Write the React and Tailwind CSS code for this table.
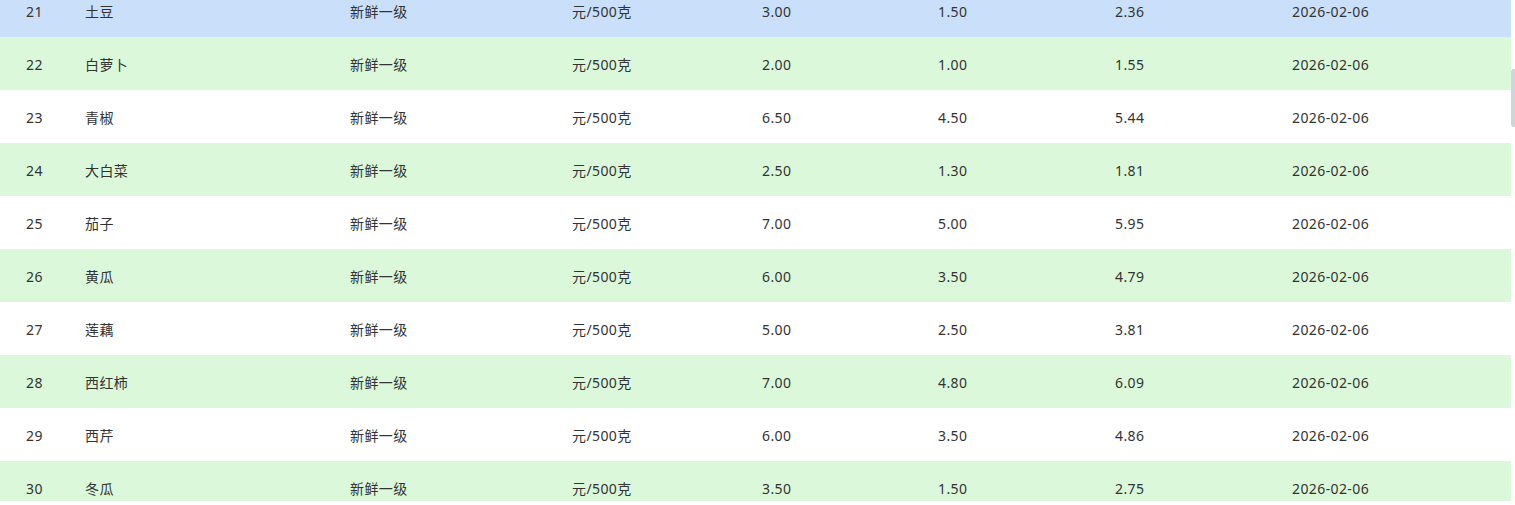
import React from 'react';

const rows = [
  { id: 21, name: '土豆', max: '3.00', min: '1.50', avg: '2.36' },
  { id: 22, name: '白萝卜', max: '2.00', min: '1.00', avg: '1.55' },
  { id: 23, name: '青椒', max: '6.50', min: '4.50', avg: '5.44' },
  { id: 24, name: '大白菜', max: '2.50', min: '1.30', avg: '1.81' },
  { id: 25, name: '茄子', max: '7.00', min: '5.00', avg: '5.95' },
  { id: 26, name: '黄瓜', max: '6.00', min: '3.50', avg: '4.79' },
  { id: 27, name: '莲藕', max: '5.00', min: '2.50', avg: '3.81' },
  { id: 28, name: '西红柿', max: '7.00', min: '4.80', avg: '6.09' },
  { id: 29, name: '西芹', max: '6.00', min: '3.50', avg: '4.86' },
  { id: 30, name: '冬瓜', max: '3.50', min: '1.50', avg: '2.75' },
];

export default function App() {
  return (
    <div
      className="w-[1515px] h-[505px] bg-white overflow-hidden text-[14px] text-[#333] tracking-[0.4px]"
      style={{ fontFamily: '"Noto Sans", "Noto Sans CJK SC", sans-serif' }}
    >
      <div className="flex h-[501px] overflow-hidden">
        {/* Table body */}
        <div className="flex-1 -mt-[16px]">
          {rows.map((row) => (
            <div
              key={row.id}
              className={`grid grid-cols-[85px_265px_222px_190px_176px_177px_177px_1fr] h-[53px] pt-[2px] items-center whitespace-nowrap ${
                row.id === 21 ? 'bg-[#cadff9]' : row.id % 2 === 0 ? 'bg-[#dbf9da]' : 'bg-white'
              }`}
            >
              <div className="pl-[26px]">{row.id}</div>
              <div>{row.name}</div>
              <div>新鲜一级</div>
              <div>元/500克</div>
              <div>{row.max}</div>
              <div>{row.min}</div>
              <div>{row.avg}</div>
              <div>2026-02-06</div>
            </div>
          ))}
        </div>

        {/* Scrollbar */}
        <div className="w-[4px] shrink-0 pt-[69px]">
          <div className="h-[58px] bg-[#cfd5dc] rounded-l-[3px]" />
        </div>
      </div>
    </div>
  );
}
